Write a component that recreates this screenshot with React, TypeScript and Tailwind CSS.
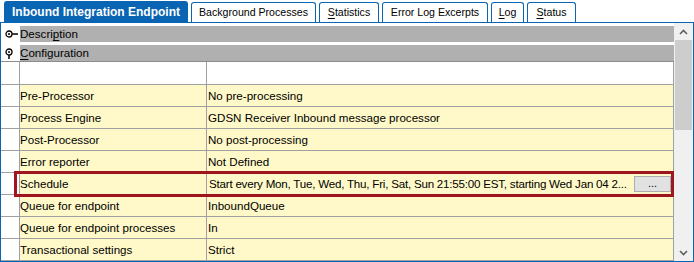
import { ReactNode } from 'react';

interface Tab {
  label: ReactNode;
  width: string;
  active?: boolean;
}

const u = (ch: string) => <span className="underline underline-offset-[2px]">{ch}</span>;

const tabs: Tab[] = [
  { label: 'Inbound Integration Endpoint', width: 'w-[184px]', active: true },
  { label: 'Background Processes', width: 'w-[125px]' },
  { label: <>{u('S')}tatistics</>, width: 'w-[60px]' },
  { label: 'Error Log Excerpts', width: 'w-[106px]' },
  { label: <>{u('L')}og</>, width: 'w-[33px]' },
  { label: <>{u('S')}tatus</>, width: 'w-[49px]' },
];

const rows: [string, string][] = [
  ['Pre-Processor', 'No pre-processing'],
  ['Process Engine', 'GDSN Receiver Inbound message processor'],
  ['Post-Processor', 'No post-processing'],
  ['Error reporter', 'Not Defined'],
  ['Schedule', 'Start every Mon, Tue, Wed, Thu, Fri, Sat, Sun 21:55:00 EST, starting Wed Jan 04 2...'],
  ['Queue for endpoint', 'InboundQueue'],
  ['Queue for endpoint processes', 'In'],
  ['Transactional settings', 'Strict'],
];

const PinRight = () => (
  <svg width="14" height="8" viewBox="0 0 14 8" className="block">
    <circle cx="4" cy="4" r="3" fill="none" stroke="#000" strokeWidth="1.3" />
    <circle cx="4" cy="4" r="1" fill="#000" />
    <line x1="7" y1="4" x2="13" y2="4" stroke="#000" strokeWidth="1.5" />
  </svg>
);

const PinDown = () => (
  <svg width="8" height="11" viewBox="0 0 8 11" className="block">
    <circle cx="4" cy="4" r="3" fill="none" stroke="#000" strokeWidth="1.3" />
    <circle cx="4" cy="4" r="1" fill="#000" />
    <line x1="4" y1="7" x2="4" y2="11" stroke="#000" strokeWidth="1.5" />
  </svg>
);

const SectionBar = ({ icon, children }: { icon: ReactNode; children: ReactNode }) => (
  <div className="flex h-[16px]">
    <div className="w-[19px] flex items-center pl-[4px]">{icon}</div>
    <div className="w-[654px] bg-[#b0b0b0] flex items-center text-[11.6px] leading-none text-black">{children}</div>
  </div>
);

export default function App() {
  return (
    <div
      className="w-[694px] h-[262px] bg-white overflow-hidden relative text-black"
      style={{ fontFamily: '"Liberation Sans", Arial, sans-serif' }}
    >
      {/* Tab strip */}
      <div className="flex items-end h-[23px] pl-[4px] gap-[3px] border-b border-[#0a64b4]">
        {tabs.map((tab, i) => (
          <div
            key={i}
            className={`${tab.width} flex items-center justify-center rounded-t-[3px] leading-none ${
              tab.active
                ? 'h-[21px] bg-[#0a64b4] text-white font-bold text-[12px]'
                : 'h-[20px] bg-white border border-b-0 border-[#0a64b4] text-[10.6px]'
            }`}
          >
            {tab.label}
          </div>
        ))}
      </div>

      {/* Frame */}
      <div className="flex h-[239px] border-l border-r border-b border-[#0a64b4]">
        <div className="w-[673px] flex flex-col pt-[3px]">
          <SectionBar icon={<PinRight />}>
            Descri{u('p')}tion
          </SectionBar>
          <div className="h-[3px]" />
          <SectionBar icon={<PinDown />}>
            {u('C')}onfiguration
          </SectionBar>

          <div className="border-t border-[#8c8c8c] text-[11.6px] leading-none">
            <div className="flex h-[23px] border-b border-[#a0a0a0] bg-white">
              <div className="w-[19px] border-r border-[#a0a0a0]" />
              <div className="w-[187px] border-r border-[#a0a0a0]" />
              <div className="w-[467px] border-r border-[#a0a0a0]" />
            </div>
            {rows.map(([label, value]) => (
              <div key={label} className="flex h-[22px] border-b border-[#a0a0a0]">
                <div className="w-[19px] border-r border-[#a0a0a0] bg-white" />
                <div className="w-[187px] border-r border-[#a0a0a0] bg-[#fff9c9] flex items-center whitespace-nowrap overflow-hidden">
                  {label}
                </div>
                <div
                  className={`w-[467px] border-r border-[#a0a0a0] bg-[#fff9c9] flex items-center whitespace-nowrap overflow-hidden ${
                    label === 'Schedule' ? 'pl-[2px] justify-between pr-[2px]' : 'pl-[1px]'
                  }`}
                >
                  <span className={label === 'Schedule' ? 'tracking-[-0.22px]' : ''}>{value}</span>
                  {label === 'Schedule' && (
                    <div className="w-[37px] h-[16px] bg-[#e1e1e1] border border-[#adadad] flex items-center justify-center text-[11px] shrink-0">
                      ...
                    </div>
                  )}
                </div>
              </div>
            ))}
          </div>
        </div>

        {/* Scrollbar */}
        <div className="w-[19px] bg-[#f0f0f0] flex flex-col">
          <div className="h-[17px] flex items-center justify-center">
            <svg width="9" height="6" viewBox="0 0 9 6">
              <path d="M1 5 L4.5 1.5 L8 5" fill="none" stroke="#606060" strokeWidth="1.6" />
            </svg>
          </div>
          <div className="mx-[1px] h-[90px] bg-[#cdcdcd]" />
          <div className="flex-1" />
          <div className="h-[17px] flex items-center justify-center">
            <svg width="9" height="6" viewBox="0 0 9 6">
              <path d="M1 1 L4.5 4.5 L8 1" fill="none" stroke="#606060" strokeWidth="1.6" />
            </svg>
          </div>
        </div>
      </div>

      {/* Highlight around the Schedule row */}
      <div className="absolute left-[14px] top-[171px] w-[660px] h-[26px] border-[3px] border-[#a0161f] pointer-events-none" />
    </div>
  );
}
